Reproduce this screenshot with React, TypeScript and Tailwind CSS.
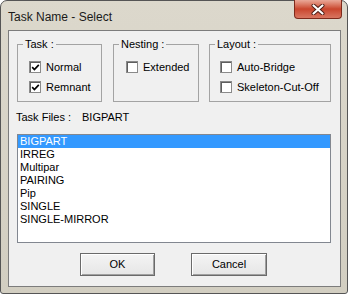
import React, { useState } from 'react';

const taskFiles = ['BIGPART', 'IRREG', 'Multipar', 'PAIRING', 'Pip', 'SINGLE', 'SINGLE-MIRROR'];

const CheckBox: React.FC<{ label: string; checked: boolean; onToggle: () => void }> = ({ label, checked, onToggle }) => (
  <div className="flex items-center h-[20px] cursor-default" onClick={onToggle}>
    <div className="w-[12px] h-[12px] bg-white border border-[#8a8a8a] shadow-[inset_1px_1px_0_#5e5e5e] flex items-center justify-center">
      {checked && (
        <svg width="9" height="9" viewBox="0 0 9 9">
          <path d="M1.2 4.2 L3.4 6.5 L7.8 1.8" fill="none" stroke="#000" strokeWidth="1.7" />
        </svg>
      )}
    </div>
    <span className="ml-[5px]">{label}</span>
  </div>
);

// group box: label sits over the top border line
const Group: React.FC<{ title: string; width: string; inset: string; children: React.ReactNode }> = ({ title, width, inset, children }) => (
  <div className={`relative ${width} h-[58px] border border-[#a3a3a3] pt-[12px] ${inset}`}>
    <span className="absolute left-[5px] -top-[7px] px-[2px] leading-[12px] bg-[#f0f0f0]">{title}</span>
    {children}
  </div>
);

const App: React.FC = () => {
  const [normal, setNormal] = useState(true);
  const [remnant, setRemnant] = useState(true);
  const [extended, setExtended] = useState(false);
  const [autoBridge, setAutoBridge] = useState(false);
  const [skeleton, setSkeleton] = useState(false);
  const [selected, setSelected] = useState(0);

  return (
    <div className="w-[348px] h-[295px] bg-white text-[11px] text-black" style={{ fontFamily: '"Liberation Sans", Arial, sans-serif' }}>
      <div className="h-[294px] flex flex-col rounded-t-[7px] rounded-b-[3px] border border-[#555555] bg-gradient-to-b from-[#dcd8cc] to-[#d2cec1]">
        {/* title bar */}
        <div className="h-[29px] flex justify-between pl-[7px] pr-[5px]">
          <div className="text-[12px] pt-[7px] text-[#1a1a1a]">Task Name - Select</div>
          <button className="w-[48px] h-[19px] -mt-[1px] rounded-b-[4px] border border-t-0 border-[#7e2a1c] bg-gradient-to-b from-[#e9a898] via-[#c9452d] to-[#d87560] flex items-center justify-center">
            <svg width="14" height="11" viewBox="0 0 14 11">
              <path d="M2.5 1.5 L11.5 9.5 M11.5 1.5 L2.5 9.5" stroke="#4a1a12" strokeWidth="4" strokeLinecap="round" />
              <path d="M2.5 1.5 L11.5 9.5 M11.5 1.5 L2.5 9.5" stroke="#ffffff" strokeWidth="2.2" strokeLinecap="round" />
            </svg>
          </button>
        </div>

        {/* client area */}
        <div className="flex-1 pl-[7px] pr-[6px] pb-[6px] flex">
          <div className="flex-1 border border-[#7c7c7c] bg-[#f0f0f0] flex flex-col">
            <div className="flex mt-[13px] ml-[8px]">
              <Group title="Task :" width="w-[85px]" inset="pl-[11px]">
                <CheckBox label="Normal" checked={normal} onToggle={() => setNormal(!normal)} />
                <CheckBox label="Remnant" checked={remnant} onToggle={() => setRemnant(!remnant)} />
              </Group>
              <div className="ml-[11px]">
                <Group title="Nesting :" width="w-[86px]" inset="pl-[12px]">
                  <CheckBox label="Extended" checked={extended} onToggle={() => setExtended(!extended)} />
                </Group>
              </div>
              <div className="ml-[10px]">
                <Group title="Layout :" width="w-[122px]" inset="pl-[10px]">
                  <CheckBox label="Auto-Bridge" checked={autoBridge} onToggle={() => setAutoBridge(!autoBridge)} />
                  <CheckBox label="Skeleton-Cut-Off" checked={skeleton} onToggle={() => setSkeleton(!skeleton)} />
                </Group>
              </div>
            </div>

            <div className="flex mt-[9px] ml-[7px] leading-[13px]">
              <span className="w-[66px]">Task Files :</span>
              <span>{taskFiles[selected]}</span>
            </div>

            <div className="mt-[10px] ml-[8px] w-[314px] h-[109px] border border-[#828790] bg-white">
              {taskFiles.map((f, i) => (
                <div
                  key={f}
                  onClick={() => setSelected(i)}
                  className={`h-[13px] leading-[13px] pl-[2px] cursor-default ${i === selected ? 'bg-[#3399ff] text-white' : ''}`}
                >
                  {f}
                </div>
              ))}
            </div>

            <div className="flex justify-center gap-[36px] mt-[10px] pr-[2px]">
              <button className="w-[75px] h-[23px] border border-[#6a6a6a] bg-gradient-to-b from-[#f4f4f4] to-[#e6e6e6] shadow-[inset_1px_1px_0_#ffffff,inset_-1px_-1px_0_#a0a0a0]">OK</button>
              <button className="w-[76px] h-[23px] border border-[#6a6a6a] bg-gradient-to-b from-[#f4f4f4] to-[#e6e6e6] shadow-[inset_1px_1px_0_#ffffff,inset_-1px_-1px_0_#a0a0a0]">Cancel</button>
            </div>
          </div>
        </div>
      </div>
    </div>
  );
};

export default App;
